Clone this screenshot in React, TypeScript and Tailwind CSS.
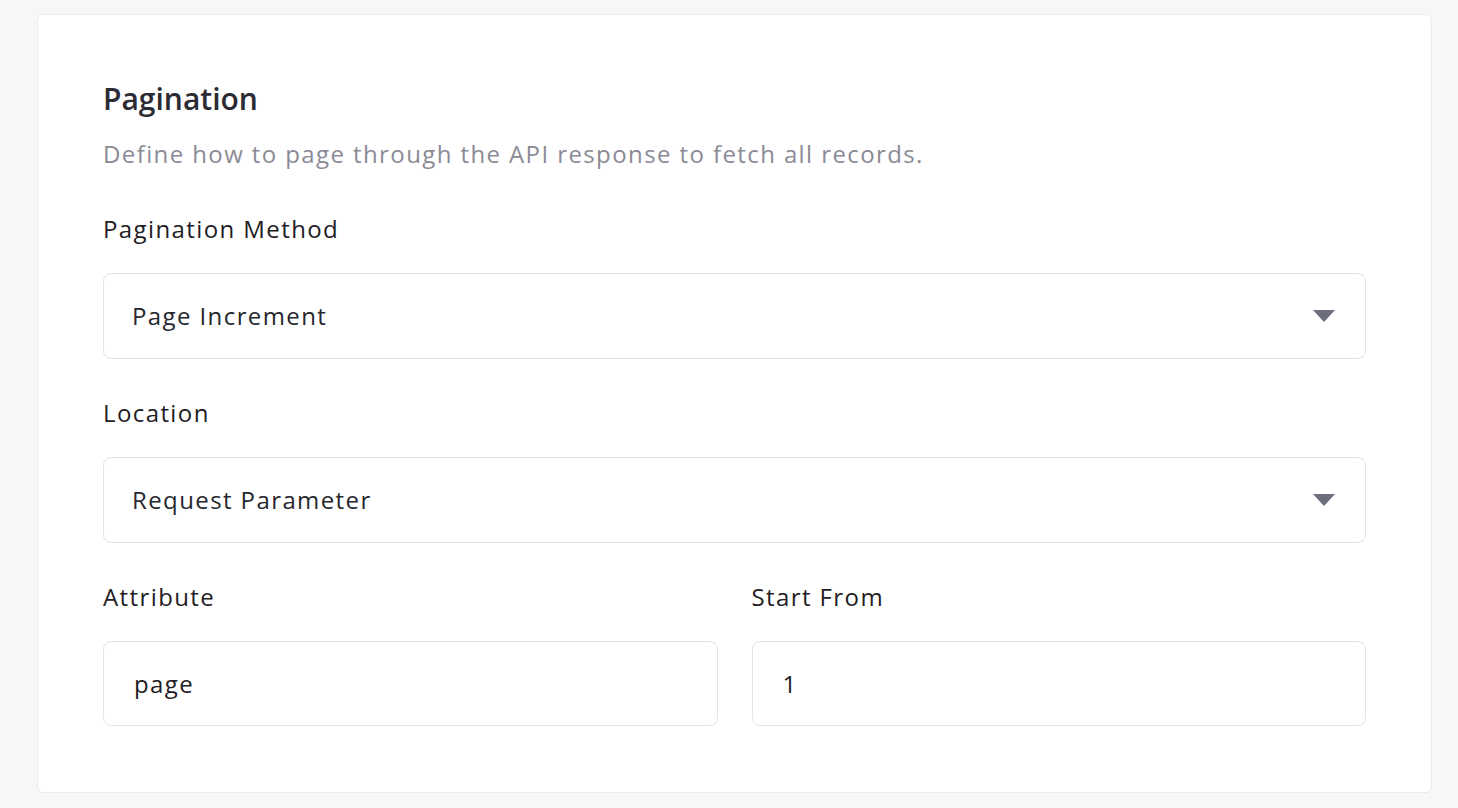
import { useState } from 'react';

const fontStack = { fontFamily: '"Open Sans", "Noto Sans", sans-serif' };

function Caret() {
  return (
    <svg width="22" height="12" viewBox="0 0 22 12" aria-hidden="true">
      <path d="M0 0 H22 L11 12 Z" fill="#6b6e7b" />
    </svg>
  );
}

function SelectField({ label, value }: { label: string; value: string }) {
  return (
    <div className="flex flex-col">
      <label className="text-[24px] leading-[32px] tracking-[1.4px] text-[#1f2024]">{label}</label>
      <button
        type="button"
        className="mt-[28px] flex h-[86px] w-full items-center justify-between rounded-[8px] border border-[#e4e4e4] bg-white pl-[28px] pr-[30px] text-left text-[24px] tracking-[1.4px] text-[#26272d]"
      >
        <span>{value}</span>
        <Caret />
      </button>
    </div>
  );
}

function TextField({ label, value }: { label: string; value: string }) {
  const [v, setV] = useState(value);
  return (
    <div className="flex flex-1 flex-col">
      <label className="text-[24px] leading-[32px] tracking-[1.4px] text-[#1f2024]">{label}</label>
      <input
        value={v}
        onChange={(e) => setV(e.target.value)}
        className="mt-[28px] h-[85px] w-full rounded-[8px] border border-[#e4e4e4] bg-white px-[30px] text-[24px] tracking-[1.4px] text-[#1f2024] outline-none"
        style={fontStack}
      />
    </div>
  );
}

export default function App() {
  return (
    <div className="min-h-[808px] bg-[#f7f7f7] pl-[37px] pt-[14px]" style={fontStack}>
      <div className="w-[1395px] rounded-[6px] border border-[#ebebeb] bg-white px-[65px] pb-[66px] pt-[66px]">
        <h2 className="text-[30px] font-semibold leading-[36px] text-[#2a2b33]">Pagination</h2>
        <p className="mt-[21px] text-[24px] leading-[32px] tracking-[1.4px] text-[#8b8b96]">
          Define how to page through the API response to fetch all records.
        </p>
        <div className="mt-[43px] flex flex-col gap-[38px]">
          <SelectField label="Pagination Method" value="Page Increment" />
          <SelectField label="Location" value="Request Parameter" />
          <div className="flex gap-[34px]">
            <TextField label="Attribute" value="page" />
            <TextField label="Start From" value="1" />
          </div>
        </div>
      </div>
    </div>
  );
}
